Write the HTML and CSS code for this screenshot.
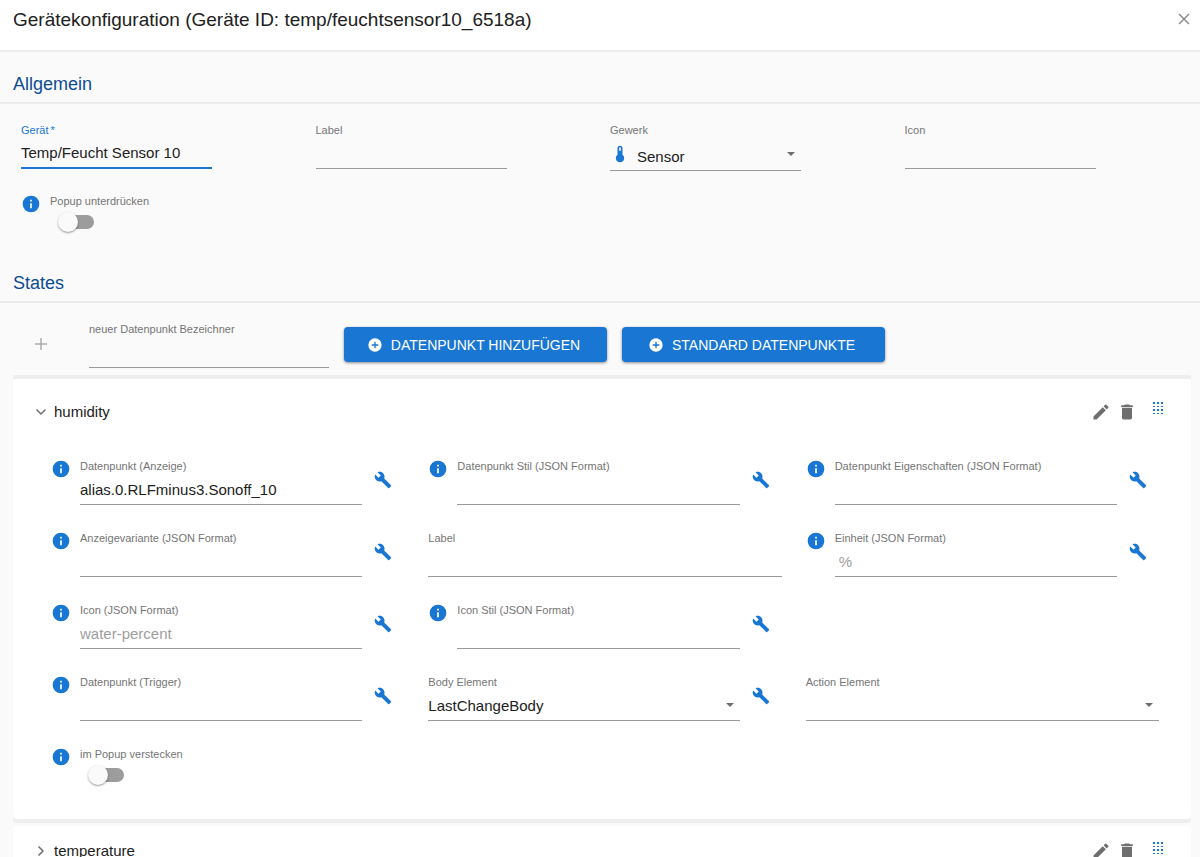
FILE: index.html
```html
<!DOCTYPE html>
<html lang="de">
<head>
<meta charset="utf-8">
<meta name="viewport" content="width=device-width, initial-scale=1">
<title>Gerätekonfiguration</title>
<link rel="stylesheet" href="styles.css">
</head>
<body>
<svg class="sprite" aria-hidden="true">
  <symbol id="i-info" viewBox="0 0 24 24"><path d="M13 9h-2V7h2m0 10h-2v-6h2m-1-9A10 10 0 0 0 2 12a10 10 0 0 0 10 10 10 10 0 0 0 10-10A10 10 0 0 0 12 2z"/></symbol>
  <symbol id="i-wrench" viewBox="0 0 24 24"><path d="M22.7 19l-9.1-9.1c.9-2.3.4-5-1.5-6.9-2-2-5-2.4-7.4-1.3L9 6 6 9 1.6 4.7C.4 7.1.9 10.1 2.9 12.1c1.9 1.9 4.6 2.4 6.9 1.5l9.1 9.1c.4.4 1 .4 1.4 0l2.3-2.3c.5-.4.5-1.1.1-1.4z"/></symbol>
  <symbol id="i-pencil" viewBox="0 0 24 24"><path d="M3 17.25V21h3.75L17.81 9.94l-3.75-3.75L3 17.25zM20.71 7.04a1 1 0 0 0 0-1.41l-2.34-2.34a1 1 0 0 0-1.41 0l-1.83 1.83 3.75 3.75 1.83-1.83z"/></symbol>
  <symbol id="i-trash" viewBox="0 0 24 24"><path d="M6 19c0 1.1.9 2 2 2h8c1.1 0 2-.9 2-2V7H6v12zM19 4h-3.500l-1-1h-5l-1 1H5v2h14V4z"/></symbol>
  <symbol id="i-grip" viewBox="0 0 10 13"><path d="M0 0h2v2H0zM4 0h2v2H4zM8 0h2v2H8zM0 4h2v1H0zM4 4h2v1H4zM8 4h2v1H8zM0 7h2v2H0zM4 7h2v2H4zM8 7h2v2H8zM0 11h2v1H0zM4 11h2v1H4zM8 11h2v1H8z"/></symbol>
  <symbol id="i-plus" viewBox="0 0 24 24"><path d="M13 11V4h-2v7H4v2h7v7h2v-7h7v-2z"/></symbol>
  <symbol id="i-plus-circle" viewBox="0 0 24 24"><path d="M12 2a10 10 0 1 0 0 20 10 10 0 0 0 0-20zm5 11h-4v4h-2v-4H7v-2h4V7h2v4h4v2z"/></symbol>
  <symbol id="i-close" viewBox="0 0 12 12"><path d="M1 1l10 10M11 1L1 11" fill="none" stroke="currentColor" stroke-width="1.500"/></symbol>
  <symbol id="i-caret" viewBox="0 0 8 4"><path d="M0 0h8L4 4z"/></symbol>
  <symbol id="i-down" viewBox="0 0 12 12"><path d="M1.500 3.500L6 8l4.500-4.500" fill="none" stroke="currentColor" stroke-width="1.500"/></symbol>
  <symbol id="i-right" viewBox="0 0 12 12"><path d="M3.500 1.500L8 6l-4.500 4.500" fill="none" stroke="currentColor" stroke-width="1.500"/></symbol>
  <symbol id="i-thermo" viewBox="0 0 24 24"><path d="M15 13V5a3 3 0 0 0-6 0v8a5 5 0 1 0 6 0m-3-9a1 1 0 0 1 1 1v3h-2V5a1 1 0 0 1 1-1z"/></symbol>
</svg>

<div class="dialog">
  <header class="dialog-head">
    <h1>Gerätekonfiguration (Geräte ID: temp/feuchtsensor10_6518a)</h1>
    <button class="icon-btn close" type="button" aria-label="Schließen"><svg class="icon-12"><use href="#i-close"/></svg></button>
  </header>

  <main class="dialog-body">
    <h2>Allgemein</h2>
    <section class="general">
      <div class="field active">
        <label for="device">Gerät<span class="star">*</span></label>
        <input id="device" type="text" value="Temp/Feucht Sensor 10">
      </div>
      <div class="field">
        <label for="dev-label">Label</label>
        <input id="dev-label" type="text">
      </div>
      <div class="field">
        <label for="trade">Gewerk</label>
        <div class="select with-icon">
          <svg class="icon-20 lead"><use href="#i-thermo"/></svg>
          <select id="trade"><option>Sensor</option></select>
          <svg class="caret"><use href="#i-caret"/></svg>
        </div>
      </div>
      <div class="field">
        <label for="dev-icon">Icon</label>
        <input id="dev-icon" type="text">
      </div>
      <div class="row">
        <svg class="icon-20 info"><use href="#i-info"/></svg>
        <div class="field">
          <label for="popup">Popup unterdrücken</label>
          <input id="popup" class="switch" type="checkbox" role="switch">
        </div>
      </div>
    </section>

    <h2>States</h2>
    <section class="toolbar">
      <button class="icon-btn add" type="button" aria-label="Hinzufügen"><svg class="icon-18"><use href="#i-plus"/></svg></button>
      <div class="field new-id">
        <label for="new-id">neuer Datenpunkt Bezeichner</label>
        <input id="new-id" type="text">
      </div>
      <button class="btn" type="button"><svg class="icon-16"><use href="#i-plus-circle"/></svg>DATENPUNKT HINZUFÜGEN</button>
      <button class="btn" type="button"><svg class="icon-16"><use href="#i-plus-circle"/></svg>STANDARD DATENPUNKTE</button>
    </section>

    <div class="states">
      <article class="card open">
        <div class="card-head">
          <button class="toggle" type="button" aria-expanded="true"><svg class="icon-12"><use href="#i-down"/></svg>humidity</button>
          <button class="icon-btn" type="button" aria-label="Bearbeiten"><svg class="icon-20"><use href="#i-pencil"/></svg></button>
          <button class="icon-btn" type="button" aria-label="Löschen"><svg class="icon-20"><use href="#i-trash"/></svg></button>
          <button class="icon-btn grip" type="button" aria-label="Verschieben"><svg><use href="#i-grip"/></svg></button>
        </div>
        <div class="grid">
          <div class="row">
            <svg class="icon-20 info"><use href="#i-info"/></svg>
            <div class="field"><label for="f1">Datenpunkt (Anzeige)</label><input id="f1" type="text" value="alias.0.RLFminus3.Sonoff_10"></div>
            <button class="icon-btn wrench" type="button" aria-label="Anpassen"><svg class="icon-18"><use href="#i-wrench"/></svg></button>
          </div>
          <div class="row">
            <svg class="icon-20 info"><use href="#i-info"/></svg>
            <div class="field"><label for="f2">Datenpunkt Stil (JSON Format)</label><input id="f2" type="text"></div>
            <button class="icon-btn wrench" type="button" aria-label="Anpassen"><svg class="icon-18"><use href="#i-wrench"/></svg></button>
          </div>
          <div class="row">
            <svg class="icon-20 info"><use href="#i-info"/></svg>
            <div class="field"><label for="f3">Datenpunkt Eigenschaften (JSON Format)</label><input id="f3" type="text"></div>
            <button class="icon-btn wrench" type="button" aria-label="Anpassen"><svg class="icon-18"><use href="#i-wrench"/></svg></button>
          </div>
          <div class="row">
            <svg class="icon-20 info"><use href="#i-info"/></svg>
            <div class="field"><label for="f4">Anzeigevariante (JSON Format)</label><input id="f4" type="text"></div>
            <button class="icon-btn wrench" type="button" aria-label="Anpassen"><svg class="icon-18"><use href="#i-wrench"/></svg></button>
          </div>
          <div class="row">
            <div class="field"><label for="f5">Label</label><input id="f5" type="text"></div>
          </div>
          <div class="row">
            <svg class="icon-20 info"><use href="#i-info"/></svg>
            <div class="field"><label for="f6">Einheit (JSON Format)</label><input id="f6" class="indent" type="text" placeholder="%"></div>
            <button class="icon-btn wrench" type="button" aria-label="Anpassen"><svg class="icon-18"><use href="#i-wrench"/></svg></button>
          </div>
          <div class="row">
            <svg class="icon-20 info"><use href="#i-info"/></svg>
            <div class="field"><label for="f7">Icon (JSON Format)</label><input id="f7" type="text" placeholder="water-percent"></div>
            <button class="icon-btn wrench" type="button" aria-label="Anpassen"><svg class="icon-18"><use href="#i-wrench"/></svg></button>
          </div>
          <div class="row">
            <svg class="icon-20 info"><use href="#i-info"/></svg>
            <div class="field"><label for="f8">Icon Stil (JSON Format)</label><input id="f8" type="text"></div>
            <button class="icon-btn wrench" type="button" aria-label="Anpassen"><svg class="icon-18"><use href="#i-wrench"/></svg></button>
          </div>
          <div class="row line-start">
            <svg class="icon-20 info"><use href="#i-info"/></svg>
            <div class="field"><label for="f9">Datenpunkt (Trigger)</label><input id="f9" type="text"></div>
            <button class="icon-btn wrench" type="button" aria-label="Anpassen"><svg class="icon-18"><use href="#i-wrench"/></svg></button>
          </div>
          <div class="row">
            <div class="field"><label for="f10">Body Element</label>
              <div class="select"><select id="f10"><option>LastChangeBody</option></select><svg class="caret"><use href="#i-caret"/></svg></div>
            </div>
            <button class="icon-btn wrench" type="button" aria-label="Anpassen"><svg class="icon-18"><use href="#i-wrench"/></svg></button>
          </div>
          <div class="row">
            <div class="field"><label for="f11">Action Element</label>
              <div class="select"><select id="f11"><option></option></select><svg class="caret"><use href="#i-caret"/></svg></div>
            </div>
          </div>
          <div class="row">
            <svg class="icon-20 info"><use href="#i-info"/></svg>
            <div class="field"><label for="f12">im Popup verstecken</label><input id="f12" class="switch" type="checkbox" role="switch"></div>
          </div>
        </div>
      </article>

      <article class="card">
        <div class="card-head">
          <button class="toggle" type="button" aria-expanded="false"><svg class="icon-12"><use href="#i-right"/></svg>temperature</button>
          <button class="icon-btn" type="button" aria-label="Bearbeiten"><svg class="icon-20"><use href="#i-pencil"/></svg></button>
          <button class="icon-btn" type="button" aria-label="Löschen"><svg class="icon-20"><use href="#i-trash"/></svg></button>
          <button class="icon-btn grip" type="button" aria-label="Verschieben"><svg><use href="#i-grip"/></svg></button>
        </div>
      </article>
    </div>
  </main>
</div>
</body>
</html>
```
FILE: styles.css
```css
* { box-sizing: border-box; }

body {
  margin: 0;
  font-family: "Liberation Sans", Arial, Helvetica, sans-serif;
  color: #212121;
  background: #fafafa;
}

svg { display: block; flex: none; fill: currentColor; }
button, input, select { font: inherit; color: inherit; }

.sprite { position: absolute; width: 0; height: 0; }
.icon-12 { width: 12px; height: 12px; }
.icon-16 { width: 16px; height: 16px; }
.icon-18 { width: 18px; height: 18px; }
.icon-20 { width: 20px; height: 20px; }

.dialog {
  display: flex;
  flex-direction: column;
  height: 100vh;
}

.dialog-head {
  display: flex;
  flex: none;
  align-items: flex-start;
  justify-content: space-between;
  padding: 8px 8px 18px 13px;
  background: #fff;
  border-bottom: 2px solid #ececec;
}

h1 {
  margin: 0;
  font-size: 19px;
  font-weight: 400;
  line-height: 24px;
}

.dialog-body {
  flex: 1;
  overflow-y: auto;
  scrollbar-width: none;
}

h2 {
  margin: 0;
  padding: 20px 13px 6px;
  font-size: 18px;
  font-weight: 400;
  line-height: 24px;
  color: #0d4b94;
  border-bottom: 2px solid #ececec;
}

.icon-btn {
  display: flex;
  align-items: center;
  justify-content: center;
  padding: 0;
  border: 0;
  background: none;
  color: #6e6e6e;
}

.close { width: 16px; height: 22px; color: #8c8c8c; }

.general {
  display: grid;
  grid-template-columns: repeat(4, 1fr);
  row-gap: 22px;
  padding: 18px 9px 16px 13px;
}

.general > .field { width: 65%; margin-left: 8px; }
.general > .row { margin-left: 8px; }

.field {
  display: flex;
  flex: 1;
  flex-direction: column;
  min-width: 0;
}

.field label {
  font-size: 11px;
  line-height: 16px;
  color: #757575;
}

.field input:not(.switch),
.select {
  height: 31px;
  border: 0;
  border-bottom: 1px solid #9a9a9a;
}

.field input:not(.switch) {
  width: 100%;
  padding: 0;
  background: none;
  font-size: 15px;
  outline: 0;
}

.field input.indent:not(.switch) { padding-left: 4px; }
.field input::placeholder { color: #9e9e9e; opacity: 1; }

.field.active label { color: #1976d2; }
.field.active input:not(.switch) { border-bottom: 2px solid #1976d2; }
.star { margin-left: 2px; }

.select {
  display: flex;
  align-items: center;
  padding-right: 6px;
}

.select select {
  flex: 1;
  min-width: 0;
  height: 100%;
  padding: 0;
  border: 0;
  outline: 0;
  appearance: none;
  background: none;
  font-size: 15px;
}

.caret { width: 8px; height: 4px; color: #6e6e6e; }
.select.with-icon { height: 33px; }
.with-icon select { padding: 4px 0 0 7px; }
.lead { color: #1976d2; }

.row { display: flex; align-items: flex-start; }
.info { margin: 1px 9px 0 0; color: #1976d2; }
.wrench { width: 42px; height: 44px; color: #1976d2; }

.switch {
  display: flex;
  align-items: center;
  width: 34px;
  height: 14px;
  margin: 6px 0 6px 10px;
  border-radius: 7px;
  appearance: none;
  background: #9c9c9c;
}

.switch::before {
  content: "";
  width: 20px;
  height: 20px;
  margin-left: -2px;
  flex: none;
  border-radius: 50%;
  background: #fafafa;
  box-shadow: 0 1px 2px rgba(0, 0, 0, 0.4);
}

.toolbar {
  display: flex;
  align-items: flex-start;
  gap: 15px;
  padding: 18px 13px 7px;
}

.add { width: 56px; height: 46px; color: #adadad; }
.new-id { flex: 0 1 240px; margin-left: 5px; }

.btn {
  display: flex;
  align-items: center;
  justify-content: center;
  gap: 8px;
  width: 263px;
  height: 35px;
  margin-top: 6px;
  padding: 0 20px 0 16px;
  border: 0;
  border-radius: 4px;
  background: #1976d2;
  color: #fff;
  font-size: 14px;
  box-shadow: 0 1px 3px rgba(0, 0, 0, 0.45);
}

.states {
  display: flex;
  flex-direction: column;
  gap: 3px;
  margin: 0 9px 0 13px;
  border-top: 4px solid #eee;
}

.card {
  background: #fff;
  border-radius: 4px;
  box-shadow: 0 4px 0 #eee;
}

.open { margin-bottom: 4px; padding-bottom: 31px; }

.card-head {
  display: flex;
  align-items: center;
  gap: 6px;
  height: 50px;
  padding: 0 28px 0 22px;
}

.open .card-head { height: 65px; }

.toggle {
  display: flex;
  flex: 1;
  align-items: center;
  gap: 7px;
  padding: 0;
  border: 0;
  background: none;
  font-size: 15px;
  line-height: 20px;
}

.toggle svg { color: #6e6e6e; }

.grip { margin: -6px 0 0 10px; color: #1976d2; }
.grip svg { width: 10px; height: 13px; }

.grid {
  display: grid;
  grid-template-columns: repeat(3, 1fr);
  gap: 25px 24px;
  padding: 14px 32px 0 38px;
}

.line-start { grid-column-start: 1; }
```
